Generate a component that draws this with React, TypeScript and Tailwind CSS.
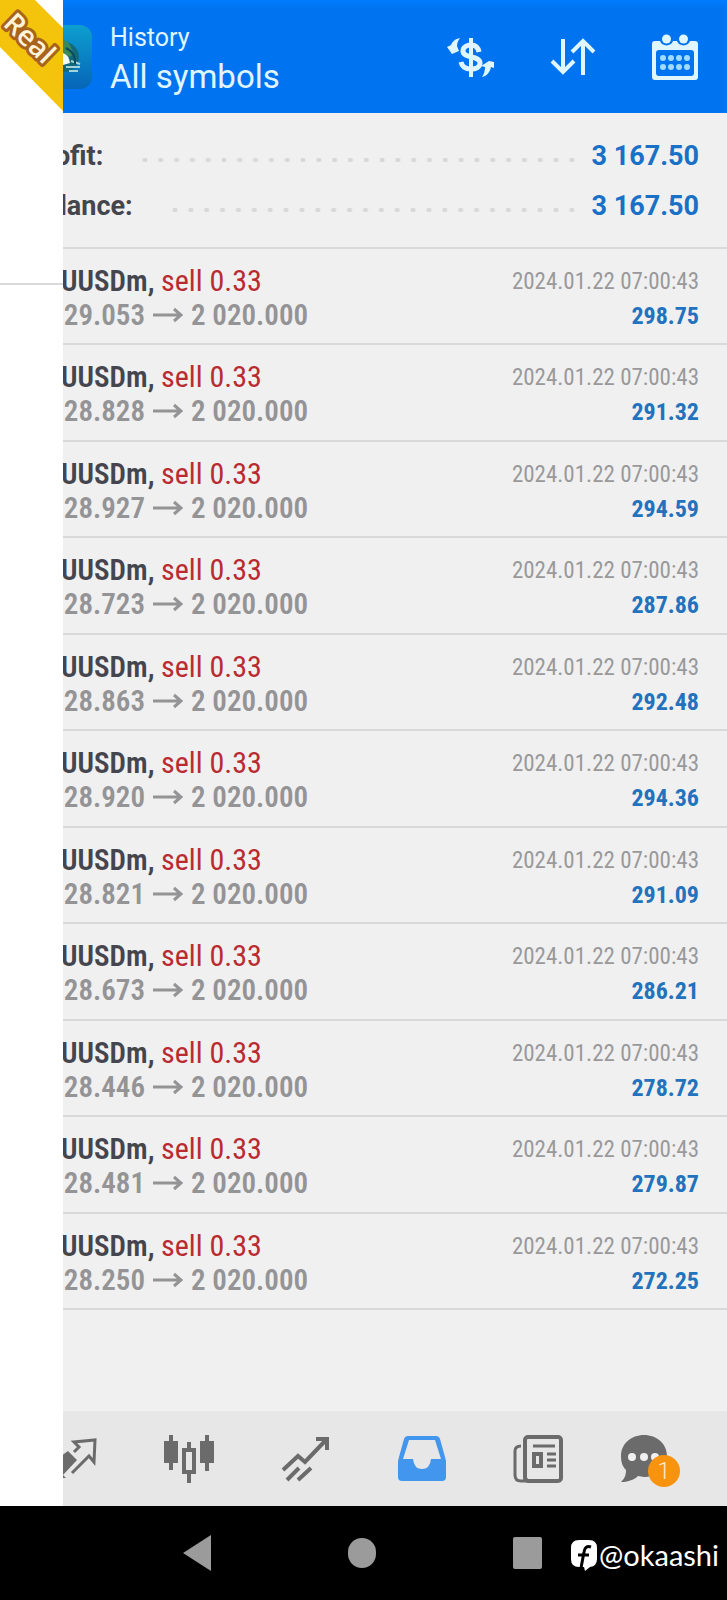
import React, { ReactNode } from "react";

interface Deal {
  open: string;
  profit: string;
}

const deals: Deal[] = [
  { open: "2 029.053", profit: "298.75" },
  { open: "2 028.828", profit: "291.32" },
  { open: "2 028.927", profit: "294.59" },
  { open: "2 028.723", profit: "287.86" },
  { open: "2 028.863", profit: "292.48" },
  { open: "2 028.920", profit: "294.36" },
  { open: "2 028.821", profit: "291.09" },
  { open: "2 028.673", profit: "286.21" },
  { open: "2 028.446", profit: "278.72" },
  { open: "2 028.481", profit: "279.87" },
  { open: "2 028.250", profit: "272.25" },
];

function IconButton({ label, children }: { label: string; children: ReactNode }) {
  return (
    <button type="button" aria-label={label} className="flex h-12 w-12 items-center justify-center text-[#e0f6ff]">
      {children}
    </button>
  );
}

function Header() {
  return (
    <header className="flex h-[113px] items-center gap-[18px] bg-[#0074f0] px-7 shadow-[inset_0_4px_6px_#007dff]">
      <svg viewBox="0 0 64 64" className="h-16 w-16 shrink-0" aria-hidden="true">
        <defs>
          <linearGradient id="logo" x1="0" y1="0" x2="0" y2="1">
            <stop offset="0" stopColor="#0d9fcf" />
            <stop offset="1" stopColor="#0765b8" />
          </linearGradient>
        </defs>
        <rect width="64" height="64" rx="12" fill="url(#logo)" />
        <circle cx="36" cy="32" r="15" fill="#12697c" />
        <path d="M35 14q9 4 10 16l-10 4z" fill="#3a8a5c" />
        <path d="M35 28q6 2 7 10l-7 2z" fill="#f2fbf6" />
        <path d="M38 42h14M41 46h9M43 36l9 3" stroke="#a5d3da" strokeWidth="2" fill="none" />
        <path d="M38 23q10 5 9 16" stroke="#0b4b62" strokeWidth="2" fill="none" />
      </svg>
      <div className="flex-1 pt-2 text-[#e0f6ff]">
        <p className="text-[25px] leading-8">History</p>
        <h1 className="text-[33px] leading-[46px]">All symbols</h1>
      </div>
      <div className="flex items-center gap-[54px]">
        <IconButton label="Currency">
          <svg viewBox="0 0 48 48" className="h-12 w-12" fill="none" stroke="currentColor">
            <path d="M32 19c-1-5-4-7-8-7s-8 2-8 6c0 8 17 4 17 12 0 4-4 6-9 6s-9-2-10-7" strokeWidth="5" />
            <path d="M24 5v39" strokeWidth="4" />
            <path d="M0 14l4-2c1-3 4-6 9-7-2 3-3 5-3 8l2 5-7 3z" fill="currentColor" stroke="none" />
            <path d="M47 35l-3-1c-1 5-4 9-9 10 2-3 3-6 3-10l-4-1 8-5 5 1z" fill="currentColor" stroke="none" />
          </svg>
        </IconButton>
        <IconButton label="Sort">
          <svg viewBox="0 0 48 48" className="h-12 w-12" fill="none" stroke="currentColor" strokeWidth="4">
            <path d="M14 6v34M3 28l11 11 11-11M34 42V8M23 19L34 8l11 11" />
          </svg>
        </IconButton>
        <IconButton label="Select period">
          <svg viewBox="0 0 48 48" className="h-12 w-12">
            <path
              fill="currentColor"
              fillRule="evenodd"
              d="M4 8h5a7 7 0 0 0 13 0h4a7 7 0 0 0 13 0h5q3 0 3 3v33q0 3-3 3H4q-3 0-3-3V11q0-3 3-3zM8 17q-3 0-3 3v20q0 3 3 3h32q3 0 3-3V20q0-3-3-3z"
            />
            <circle cx="15.500" cy="6" r="4.500" fill="currentColor" />
            <circle cx="32.500" cy="6" r="4.500" fill="currentColor" />
            <g fill="#9fdcff">
              {[12, 20, 28, 36].map((x) => (
                <React.Fragment key={x}>
                  <circle cx={x} cy="25" r="3" />
                  <circle cx={x} cy="34" r="3" />
                </React.Fragment>
              ))}
            </g>
          </svg>
        </IconButton>
      </div>
    </header>
  );
}

function SummaryRow({ label, value }: { label: string; value: string }) {
  return (
    <div className="flex items-center text-[27px] leading-[50px] font-bold">
      <dt className="text-[#45454d]">{label}</dt>
      <span className="mt-2 ml-[34px] mr-3 h-1 flex-1 bg-[radial-gradient(circle,#d8d8da_2px,transparent_3px)] bg-[length:16px_4px] bg-repeat-round" />
      <dd className="text-[#1871c6]">{value}</dd>
    </div>
  );
}

function DealRow({ deal }: { deal: Deal }) {
  return (
    <li className="flex justify-between border-b-2 border-[#d9d9da] px-7 pt-[15px] font-['Roboto_Condensed',Roboto,sans-serif] odd:h-24 even:h-[97px]">
      <div className="text-[29px] leading-[34px]">
        <p>
          <span className="font-semibold text-[#45454d]">XAUUSDm,</span>{" "}
          <span className="text-[30px] text-[#b92b30]">sell 0.33</span>
        </p>
        <p className="flex items-center gap-2 font-semibold text-[#949496]">
          <span>{deal.open}</span>
          <svg viewBox="0 0 30 16" className="h-4 w-[30px]" fill="none" stroke="currentColor" strokeWidth="3">
            <path d="M0 8h28M21 2l7 6-7 6" />
          </svg>
          <span>2 020.000</span>
        </p>
      </div>
      <div className="pt-px text-right leading-[34px]">
        <p className="text-[23px] text-[#99999b]">2024.01.22 07:00:43</p>
        <p className="text-[24px] font-bold text-[#2272bd]">{deal.profit}</p>
      </div>
    </li>
  );
}

function Tab({ label, children, active }: { label: string; children: ReactNode; active?: boolean }) {
  return (
    <a
      href="#"
      aria-label={label}
      className={`flex flex-1 items-center justify-center ${active ? "text-[#4296ee]" : "text-[#6b6b6b]"}`}
    >
      {children}
    </a>
  );
}

function TabBar() {
  return (
    <nav className="flex h-[95px] items-center bg-[#e7e7e7] px-[15px]">
      <Tab label="Quotes">
        <svg viewBox="0 0 50 50" className="h-[50px] w-[50px]" fill="none" stroke="currentColor" strokeWidth="3">
          <path d="M2 30L20 17l9 9-14 15 3 3H2z" fill="currentColor" stroke="none" />
          <path d="M24 39l17-17 5 6 1-22-21 2 5 5-5 5" />
        </svg>
      </Tab>
      <Tab label="Charts">
        <svg viewBox="0 0 50 50" className="h-[50px] w-[50px]" fill="currentColor">
          <path d="M5 1h4v6h5v22H9v7H5v-7H0V7h5zM41 1h4v6h5v22h-5v8h-4v-8h-5V7h5z" />
          <path fillRule="evenodd" d="M23 8h4v6h5v26h-5v9h-4v-9h-5V14h5zM22 18v18h6V18z" />
        </svg>
      </Tab>
      <Tab label="Trade">
        <svg viewBox="0 0 50 50" className="h-[50px] w-[50px]" fill="none" stroke="currentColor" strokeWidth="4">
          <path d="M3 36l15-14 7 6L46 6M36 5h11v11M7 46l12-12M18 46l13-12" />
        </svg>
      </Tab>
      <Tab label="History" active>
        <svg viewBox="0 0 50 50" className="h-[50px] w-[50px]">
          <path
            fill="currentColor"
            fillRule="evenodd"
            d="M11 2h28q3 0 4 3l5 18 1 4v16q0 4-4 4H5q-4 0-4-4V27l1-4L7 5q1-3 4-3zM12 6L6 25h10q1 10 9 10t9-10h10L38 6z"
          />
        </svg>
      </Tab>
      <Tab label="News">
        <svg viewBox="0 0 50 50" className="h-[50px] w-[50px]" fill="none" stroke="currentColor" strokeWidth="4">
          <rect x="12" y="3" width="36" height="44" rx="3" />
          <path d="M8 12q-6 0-6 5v24q0 6 6 6h8q-4-1-4-6M20 12h22M34 20h9M34 26h9M34 32h9" strokeWidth="3" />
          <rect x="21" y="20" width="7" height="12" />
        </svg>
      </Tab>
      <Tab label="Messages">
        <div className="relative w-[68px]">
          <svg viewBox="0 0 50 50" className="h-[50px] w-[50px]" fill="currentColor">
            <path d="M24 1c13 0 23 9 23 21S37 43 24 43l-6-1c-4 4-11 6-17 6 4-4 5-7 5-12C2 32 1 27 1 22 1 10 11 1 24 1z" />
            <g fill="#efefef">
              <circle cx="12" cy="23" r="4" />
              <circle cx="24" cy="23" r="4" />
              <circle cx="35" cy="23" r="4" />
            </g>
          </svg>
          <span className="absolute top-[21px] left-7 flex h-8 w-8 items-center justify-center rounded-full bg-[#f7930f] text-2xl font-light text-[#ffe9c4]">
            1
          </span>
        </div>
      </Tab>
    </nav>
  );
}

function Drawer() {
  return (
    <aside className="absolute inset-y-0 left-0 w-[63px] overflow-hidden bg-white">
      <svg viewBox="0 0 63 113" className="h-[113px] w-[63px]">
        <path d="M0 0h35l28 28v83L0 47z" fill="#f4c40c" />
        <text
          transform="translate(2 25) rotate(44)"
          className="font-['Open_Sans',sans-serif] text-[28px] font-semibold"
          fill="#fff3d8"
          stroke="#a8641c"
          strokeWidth="6"
          strokeLinejoin="round"
          paintOrder="stroke"
        >
          Real
        </text>
      </svg>
      <hr className="mt-[170px] border-t-2 border-[#d9d9da]" />
    </aside>
  );
}

function SystemBar() {
  return (
    <footer className="flex h-[94px] items-center justify-between bg-black pr-2 pl-[183px] text-[#9b9b9b]">
      <button type="button" aria-label="Back">
        <svg viewBox="0 0 28 36" className="h-9 w-7" fill="currentColor">
          <path d="M28 0v36L0 18z" />
        </svg>
      </button>
      <button type="button" aria-label="Home" className="h-[30px] w-7 rounded-full bg-[#9b9b9b]" />
      <div className="flex items-center gap-[29px]">
        <button type="button" aria-label="Recent apps" className="h-8 w-[29px] rounded-xs bg-[#9b9b9b]" />
        <p className="flex items-center gap-0.5 pt-1 text-white">
          <svg viewBox="0 0 26 32" className="h-8 w-[26px]">
            <path d="M8 1h10q8 0 8 8v11q0 7-7 8l-5 4-1-4H8q-8 0-8-8V9q0-8 8-8z" fill="#fff" />
            <path d="M20 8q-6-2-7 5l-3 16M7 16h11" stroke="#000" strokeWidth="3" fill="none" />
          </svg>
          <span className="font-['Lato',sans-serif] text-[29px] leading-8">@okaashi</span>
        </p>
      </div>
    </footer>
  );
}

export default function App() {
  return (
    <div className="flex min-h-screen flex-col bg-[#f0f0f0] font-['Roboto',sans-serif]">
      <div className="relative flex flex-1 flex-col">
        <Header />
        <main className="flex-1">
          <dl className="border-b-2 border-[#d9d9da] px-7 pt-[18px] pb-4">
            <SummaryRow label="Profit:" value="3 167.50" />
            <SummaryRow label="Balance:" value="3 167.50" />
          </dl>
          <ul>
            {deals.map((deal) => (
              <DealRow key={deal.open} deal={deal} />
            ))}
          </ul>
        </main>
        <TabBar />
        <Drawer />
      </div>
      <SystemBar />
    </div>
  );
}
